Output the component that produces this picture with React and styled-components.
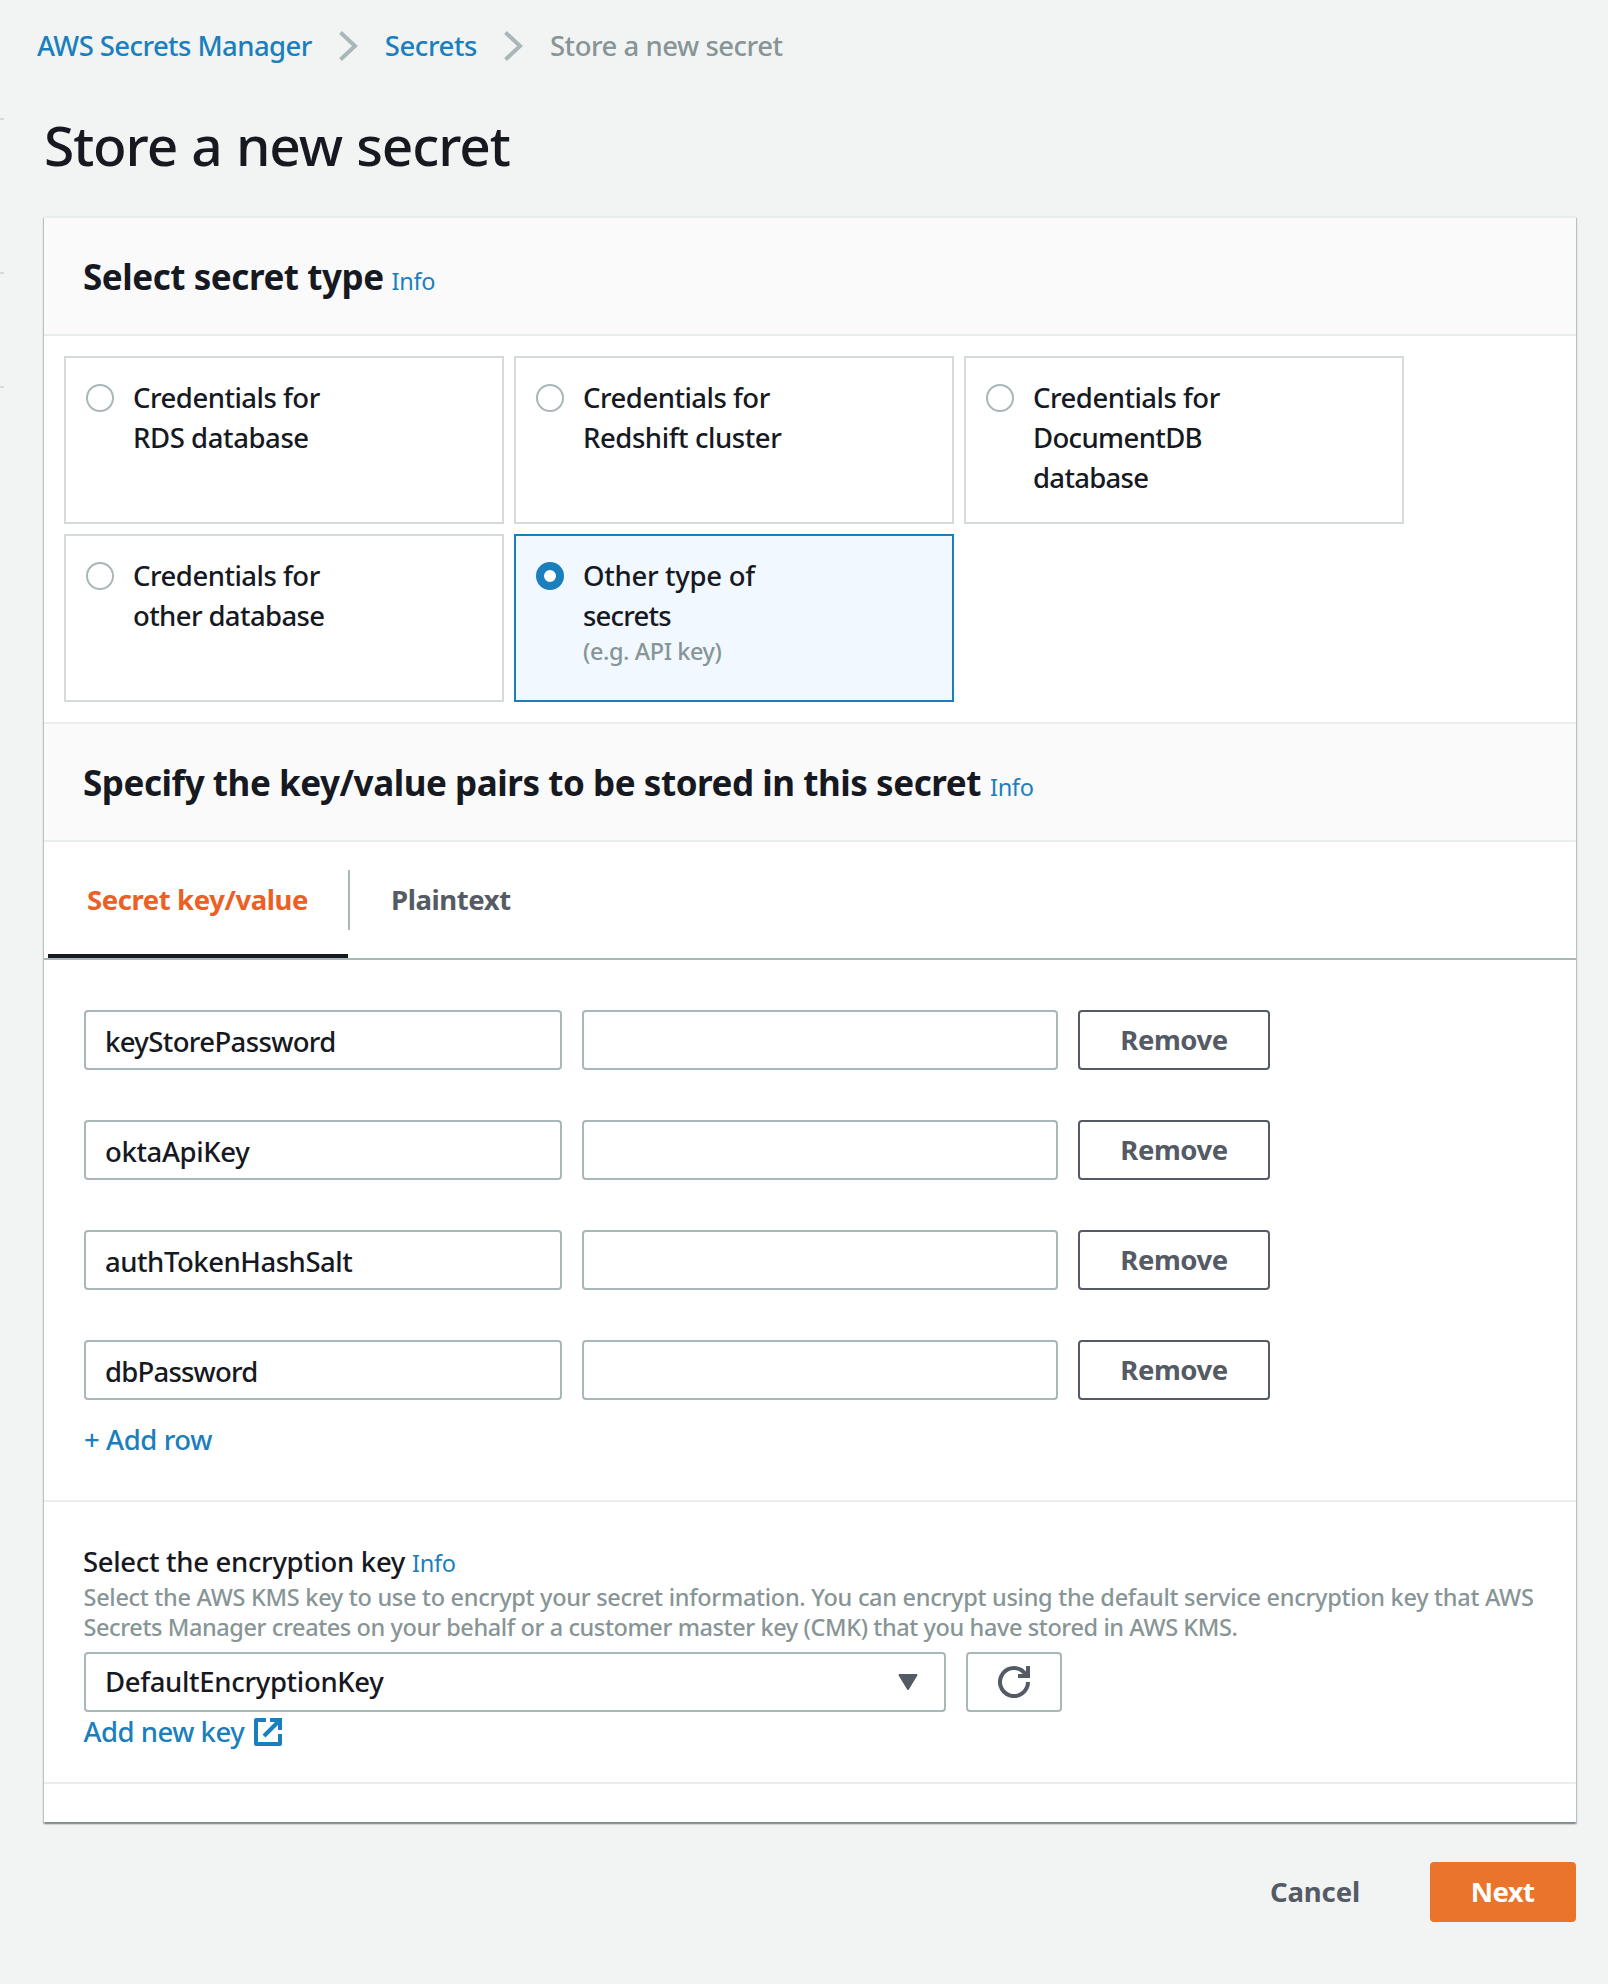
import React, { useState } from "react";
import styled, { createGlobalStyle } from "styled-components";

const colors = {
  page: "#f2f4f4",
  ink: "#16191f",
  link: "#1a7fbc",
  muted: "#879596",
  slate: "#545b64",
  line: "#eaeded",
  tileLine: "#d5dbdb",
  control: "#aab7b8",
  orange: "#ea742b",
  tabOrange: "#eb6125",
};

const GlobalStyle = createGlobalStyle`
  *, *::before, *::after { box-sizing: border-box; }
  body {
    margin: 0;
    background: ${colors.page};
    color: ${colors.ink};
    font-family: "Noto Sans", "Open Sans", sans-serif;
    font-size: 27.5px;
    font-weight: 500;
    line-height: 40px;
    font-kerning: normal;
  }
  h1, h2, p { margin: 0; }
`;

const Text = styled.span`
  letter-spacing: ${(p) => p.$track || 0}px;
  white-space: nowrap;
`;

const Page = styled.div`
  display: flex;
  min-height: 1984px;
`;

const Rail = styled.div`
  width: 4px;
  flex: none;
  display: flex;
  flex-direction: column;
`;

const RailTick = styled.div`
  height: 2px;
  margin-top: ${(p) => p.$gap}px;
  background: ${colors.tileLine};
`;

const Main = styled.main`
  width: 1572px;
  padding-left: 40px;
`;

const Breadcrumbs = styled.nav`
  display: flex;
  align-items: center;
  gap: 26px;
  height: 40px;
  margin: 26px 0 0 -7px;
`;

const Link = styled.a`
  color: ${colors.link};
  text-decoration: none;
  cursor: pointer;
  letter-spacing: ${(p) => p.$track || 0}px;
  white-space: nowrap;
`;

const Current = styled(Text)`
  color: ${colors.muted};
`;

const Title = styled.h1`
  margin: 38px 0 0;
  height: 112px;
  padding-top: 3px;
  font-size: 55px;
  font-weight: 500;
  line-height: 76px;
  letter-spacing: -1.1px;
  word-spacing: 1px;
`;

const Panel = styled.section`
  background: #fff;
  box-shadow: 0 2px 2px 0 rgba(0, 28, 36, 0.3), 1px 2px 1px 0 rgba(0, 28, 36, 0.15),
    -1px 2px 1px 0 rgba(0, 28, 36, 0.15);
`;

const PanelHeader = styled.header`
  display: flex;
  align-items: baseline;
  height: 120px;
  padding: 35px 39px 0;
  border-top: 2px solid ${colors.line};
  border-bottom: 2px solid ${colors.line};
  background: #fafafa;
`;

const Heading = styled.h2`
  font-size: 35px;
  font-weight: 700;
  line-height: 48px;
  letter-spacing: -0.45px;
`;

const Info = styled.a`
  margin-left: ${(p) => p.$gap}px;
  color: ${colors.link};
  font-size: 23.5px;
  font-weight: 400;
  line-height: 30px;
  letter-spacing: -0.3px;
  cursor: pointer;
`;

const TileGrid = styled.div`
  display: grid;
  grid-template-columns: repeat(3, 440px);
  grid-auto-rows: 168px;
  gap: 10px;
  padding: 20px;
`;

const Tile = styled.label`
  display: flex;
  gap: 19px;
  padding: 20px;
  border: 2px solid ${(p) => (p.$selected ? colors.link : colors.tileLine)};
  background: ${(p) => (p.$selected ? "#f1f8ff" : "#fff")};
  cursor: pointer;
`;

const Radio = styled.input`
  appearance: none;
  flex: none;
  width: 28px;
  height: 28px;
  margin: 6px 0 0;
  border: 2px solid ${colors.control};
  border-radius: 50%;
  background: #fff;
  &:checked {
    border: 8px solid ${colors.link};
  }
`;

const TileText = styled.div`
  display: flex;
  flex-direction: column;
`;

const TileNote = styled(Text)`
  color: ${colors.muted};
  font-size: 23.5px;
  line-height: 30px;
`;

const Tabs = styled.div`
  display: flex;
  height: 118px;
  padding-left: 4px;
  border-bottom: 2px solid ${colors.control};
`;

const Tab = styled.button`
  height: 116px;
  width: ${(p) => (p.$width ? `${p.$width}px` : "auto")};
  padding: 3px 39px 0 ${(p) => p.$inset}px;
  border: 0;
  border-bottom: 4px solid ${(p) => (p.$active ? colors.ink : "transparent")};
  background: none;
  color: ${(p) => (p.$active ? colors.tabOrange : colors.slate)};
  font: inherit;
  font-weight: 700;
  letter-spacing: -0.42px;
  text-align: left;
  white-space: nowrap;
  cursor: pointer;
`;

const TabDivider = styled.div`
  width: 2px;
  height: 60px;
  margin-top: 28px;
  background: ${colors.control};
`;

const PairSection = styled.div`
  height: 542px;
  padding: 50px 40px 0;
  border-bottom: 2px solid ${colors.line};
`;

const PairList = styled.div`
  display: flex;
  flex-direction: column;
  gap: 50px;
  margin-bottom: 20px;
`;

const PairRow = styled.div`
  display: grid;
  grid-template-columns: 478px 476px 192px;
  gap: 20px;
`;

const TextInput = styled.input`
  width: 100%;
  height: 60px;
  padding: 3px 18px 0 19px;
  border: 2px solid ${colors.control};
  border-radius: 4px;
  background: #fff;
  color: ${colors.ink};
  font: inherit;
  letter-spacing: ${(p) => p.$track || 0}px;
  outline: none;
`;

const Button = styled.button`
  height: 60px;
  padding: 0;
  border: 2px solid ${(p) => p.$line || colors.slate};
  border-radius: 4px;
  background: ${(p) => p.$fill || "#fff"};
  color: ${(p) => p.$color || colors.slate};
  font: inherit;
  font-weight: 700;
  letter-spacing: ${(p) => p.$track || 0}px;
  cursor: pointer;
`;

const KeySection = styled.div`
  height: 282px;
  padding: 40px 40px 0;
  border-bottom: 2px solid ${colors.line};
`;

const Label = styled.div`
  display: flex;
  align-items: baseline;
  height: 40px;
  margin-left: -1px;
`;

const Description = styled.p`
  display: flex;
  flex-direction: column;
  margin: 0 0 10px -0.5px;
  color: ${colors.muted};
  font-size: 23.5px;
  line-height: 30px;
`;

const KeyRow = styled.div`
  display: flex;
  gap: 20px;
`;

const Select = styled.button`
  display: flex;
  align-items: center;
  justify-content: space-between;
  width: 862px;
  height: 60px;
  padding: 0 26px 0 19px;
  border: 2px solid ${colors.control};
  border-radius: 4px;
  background: #fff;
  color: ${colors.ink};
  font: inherit;
  cursor: pointer;
`;

const RefreshButton = styled.button`
  display: flex;
  align-items: center;
  justify-content: center;
  width: 96px;
  height: 60px;
  padding: 0;
  border: 2px solid ${colors.control};
  border-radius: 4px;
  background: #fff;
  cursor: pointer;
`;

const ExternalLink = styled(Link)`
  display: flex;
  align-items: center;
  gap: 10px;
  height: 40px;
  margin-left: -0.5px;
`;

const PanelFooter = styled.div`
  height: 38px;
`;

const Actions = styled.div`
  display: flex;
  justify-content: flex-end;
  gap: 40px;
  margin-top: 40px;
`;

const CancelButton = styled(Button)`
  width: 150px;
  border-color: transparent;
  background: transparent;
`;

const NextButton = styled(Button)`
  width: 146px;
  padding-right: 1px;
`;

const Chevron = () => (
  <svg width="21" height="30" viewBox="0 0 21 30" fill="none">
    <path d="M2.5 1.5 17 15 2.5 28.5" stroke={colors.control} strokeWidth="4" />
  </svg>
);

const CaretIcon = () => (
  <svg width="20" height="16" viewBox="0 0 20 16">
    <path d="M1.5 1h17L10 15z" fill={colors.slate} stroke={colors.slate} strokeWidth="2" strokeLinejoin="round" />
  </svg>
);

const RefreshIcon = () => (
  <svg width="32" height="32" viewBox="0 0 32 32" fill="none" stroke={colors.slate} strokeWidth="4">
    <path d="M30 16A14 14 0 1 1 27.6 8.2" />
    <path d="M30 0v10H20" />
  </svg>
);

const ExternalIcon = () => (
  <svg width="28" height="28" viewBox="0 0 28 28" fill="none" stroke={colors.link} strokeWidth="4">
    <path d="M12 2H2v24h24V16" strokeLinejoin="round" />
    <path d="M16 2h10v10" />
    <path d="M26 2 10 18" />
  </svg>
);

const secretTypes = [
  { lines: [["Credentials for", -0.5], ["RDS database", -0.42]] },
  { lines: [["Credentials for", -0.5], ["Redshift cluster", -0.43]] },
  { lines: [["Credentials for", -0.5], ["DocumentDB", -0.64], ["database", -0.7]] },
  { lines: [["Credentials for", -0.5], ["other database", -0.62]] },
  { lines: [["Other type of", -0.3], ["secrets", -0.8]], note: "(e.g. API key)" },
];

const pairs = [
  ["keyStorePassword", -0.63],
  ["oktaApiKey", -0.37],
  ["authTokenHashSalt", -0.46],
  ["dbPassword", -0.79],
];

export default function App() {
  const [selected, setSelected] = useState(4);

  return (
    <Page>
      <GlobalStyle />
      <Rail>
        <RailTick $gap={118} />
        <RailTick $gap={152} />
        <RailTick $gap={112} />
      </Rail>
      <Main>
        <Breadcrumbs>
          <Link $track={-0.58}>AWS Secrets Manager</Link>
          <Chevron />
          <Link $track={-0.43}>Secrets</Link>
          <Chevron />
          <Current $track={-0.48}>Store a new secret</Current>
        </Breadcrumbs>
        <Title>Store a new secret</Title>

        <Panel>
          <PanelHeader>
            <Heading>Select secret type</Heading>
            <Info $gap={8}>Info</Info>
          </PanelHeader>
          <TileGrid>
            {secretTypes.map(({ lines, note }, i) => (
              <Tile key={i} $selected={i === selected}>
                <Radio type="radio" name="type" checked={i === selected} onChange={() => setSelected(i)} />
                <TileText>
                  {lines.map(([line, track]) => (
                    <Text key={line} $track={track}>{line}</Text>
                  ))}
                  {note && <TileNote $track={-0.42}>{note}</TileNote>}
                </TileText>
              </Tile>
            ))}
          </TileGrid>

          <PanelHeader>
            <Heading>Specify the key/value pairs to be stored in this secret</Heading>
            <Info $gap={9}>Info</Info>
          </PanelHeader>
          <Tabs>
            <Tab $active $inset={39} $width={300}>Secret key/value</Tab>
            <TabDivider />
            <Tab $inset={41}>Plaintext</Tab>
          </Tabs>
          <PairSection>
            <PairList>
              {pairs.map(([name, track]) => (
                <PairRow key={name}>
                  <TextInput defaultValue={name} $track={track} />
                  <TextInput />
                  <Button $track={-0.46}>Remove</Button>
                </PairRow>
              ))}
            </PairList>
            <Link $track={-0.41}>+ Add row</Link>
          </PairSection>

          <KeySection>
            <Label>
              <Text $track={-0.32}>Select the encryption key</Text>
              <Info $gap={7}>Info</Info>
            </Label>
            <Description>
              <Text $track={-0.29}>
                Select the AWS KMS key to use to encrypt your secret information. You can encrypt using the default service encryption key that AWS
              </Text>
              <Text $track={-0.4}>
                Secrets Manager creates on your behalf or a customer master key (CMK) that you have stored in AWS KMS.
              </Text>
            </Description>
            <KeyRow>
              <Select>
                <Text $track={-0.33}>DefaultEncryptionKey</Text>
                <CaretIcon />
              </Select>
              <RefreshButton aria-label="Refresh">
                <RefreshIcon />
              </RefreshButton>
            </KeyRow>
            <ExternalLink $track={-0.5}>
              Add new key
              <ExternalIcon />
            </ExternalLink>
          </KeySection>
          <PanelFooter />
        </Panel>

        <Actions>
          <CancelButton $track={-0.1}>Cancel</CancelButton>
          <NextButton $line={colors.orange} $fill={colors.orange} $color="#fff" $track={-0.7}>Next</NextButton>
        </Actions>
      </Main>
    </Page>
  );
}
